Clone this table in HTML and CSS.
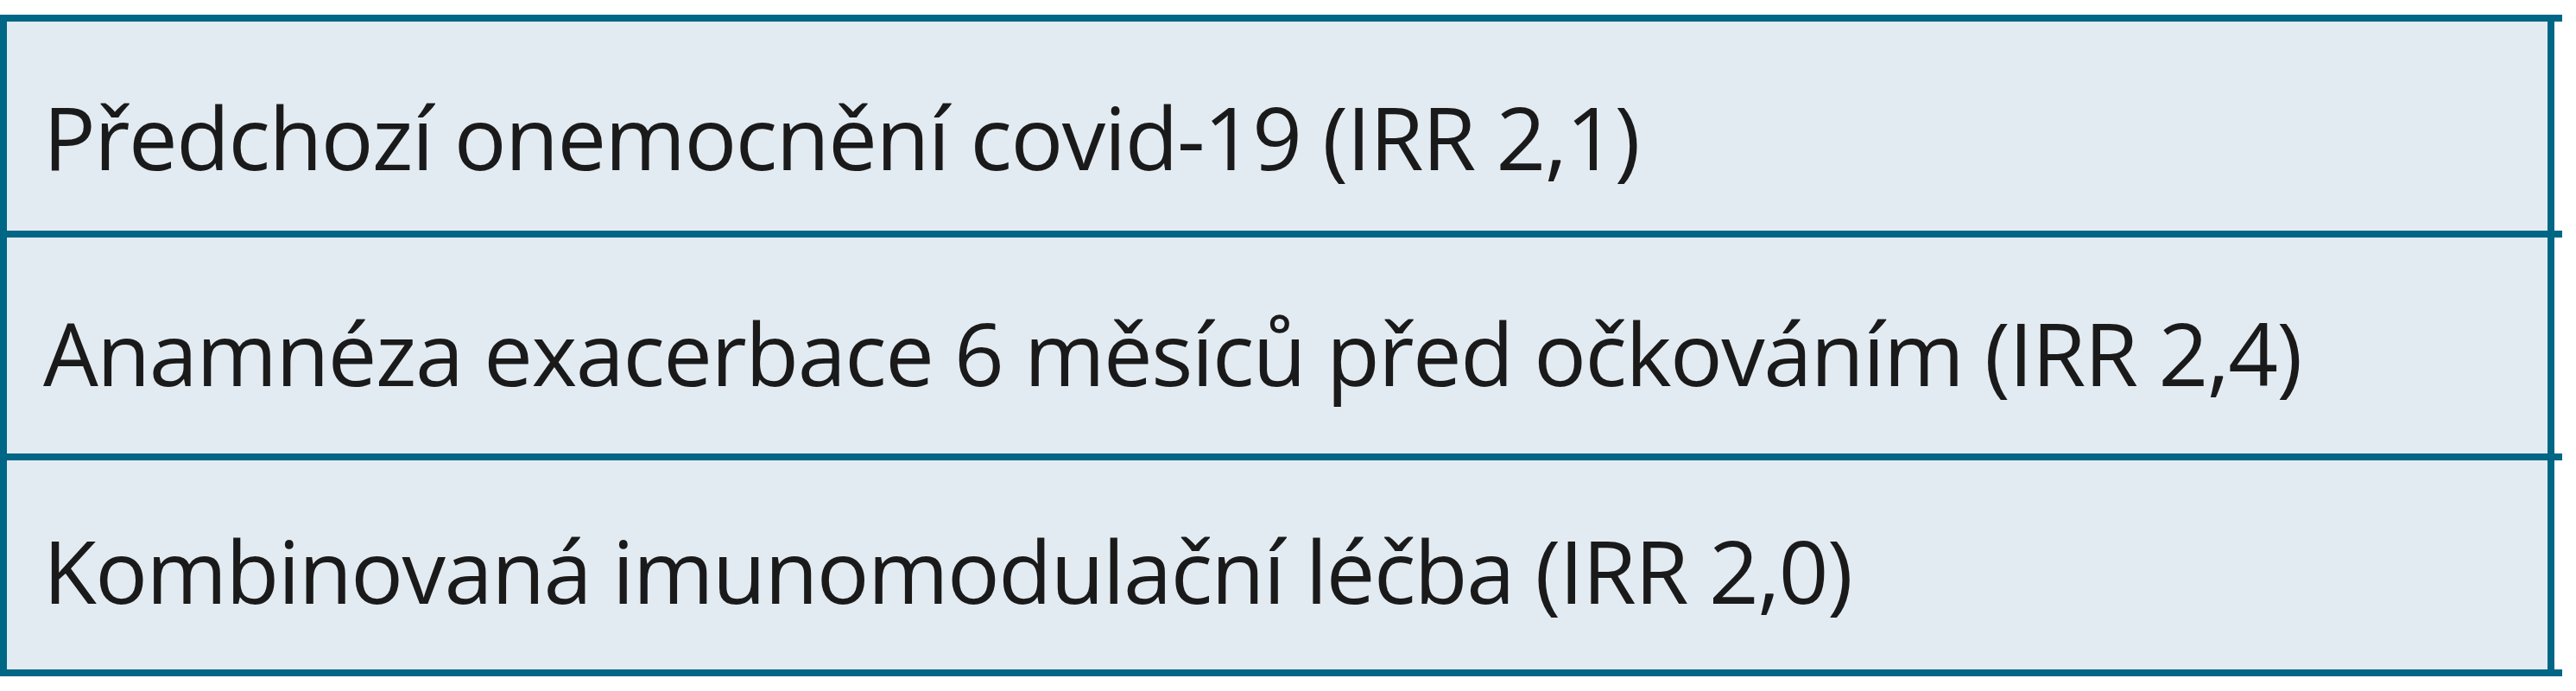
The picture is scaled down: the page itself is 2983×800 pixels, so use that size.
FILE: index.html
```html
<!DOCTYPE html>
<html lang="cs">
<head>
<meta charset="utf-8">
<title>Rizikové faktory</title>
<link rel="stylesheet" href="styles.css">
</head>
<body>
<div class="table">
  <div class="row r1"><div class="cell">Předchozí onemocnění covid-19 (IRR 2,1)</div></div>
  <div class="row r2"><div class="cell">Anamnéza exacerbace 6 měsíců před očkováním (IRR 2,4)</div></div>
  <div class="row r3"><div class="cell">Kombinovaná imunomodulační léčba (IRR 2,0)</div></div>
</div>
</body>
</html>
```
FILE: styles.css
```css
html, body {
  margin: 0;
  padding: 0;
  background: #ffffff;
}
.table {
  width: 2967px;
  margin-top: 17px;
}
.row {
  display: flex;
  border-top: 8px solid #006685;
}
.row:last-child {
  border-bottom: 8px solid #006685;
}
.cell {
  box-sizing: border-box;
  width: 2958px;
  border-left: 8px solid #006685;
  border-right: 8px solid #006685;
  background: #e3ebf2;
  padding-left: 42px;
  padding-top: 62px;
  font-family: "Open Sans", "DejaVu Sans", sans-serif;
  font-stretch: 90%;
  font-size: 101px;
  line-height: 142px;
  letter-spacing: -1.5px;
  color: #1a1a1a;
  white-space: nowrap;
}
.r1 .cell { height: 242px; }
.r2 .cell { height: 250px; }
.r3 .cell { height: 242px; padding-top: 56px; }
```
